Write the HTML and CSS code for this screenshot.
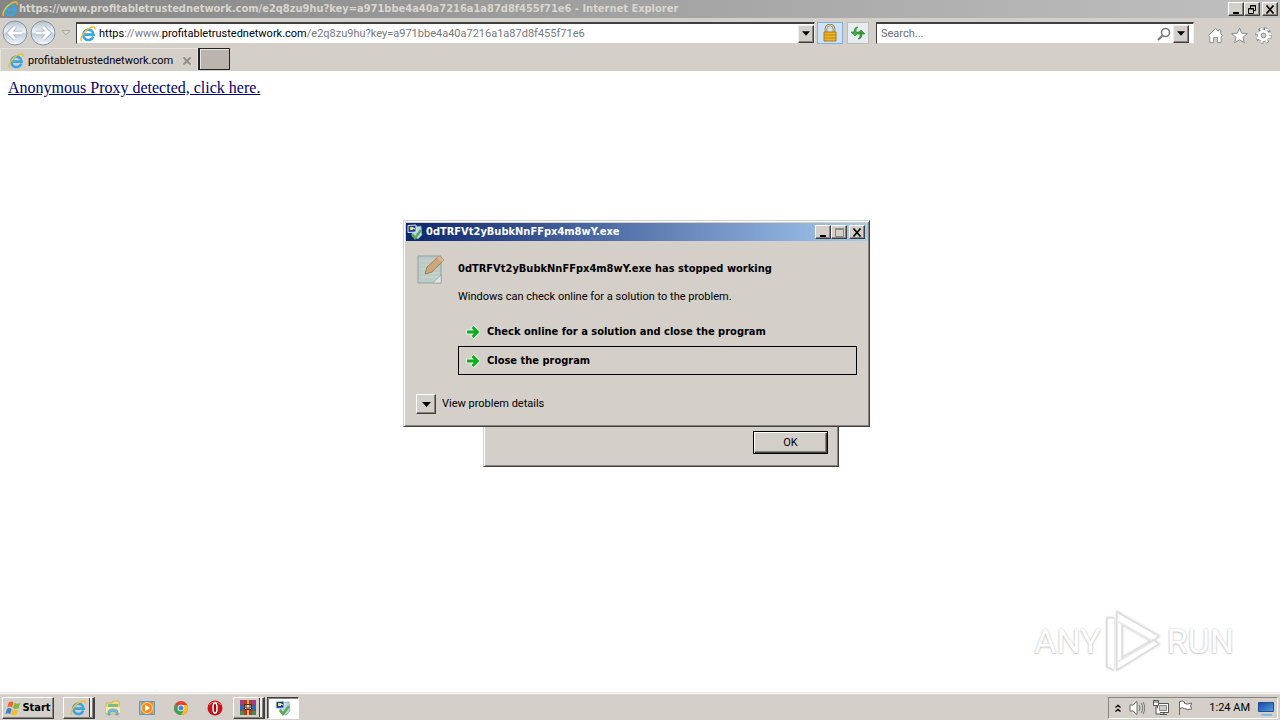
FILE: index.html
```html
<!DOCTYPE html>
<html lang="en">
<head>
<meta charset="utf-8">
<title>Internet Explorer</title>
<link rel="stylesheet" href="styles.css">
</head>
<body>
<svg class="defs" aria-hidden="true">
  <defs>
    <linearGradient id="sphere" x1="0" y1="0" x2="0" y2="1"><stop offset="0" stop-color="#b5c0cb"/><stop offset=".45" stop-color="#eef3f8"/><stop offset=".55" stop-color="#c3d0dd"/><stop offset="1" stop-color="#f4f8fb"/></linearGradient>
    <linearGradient id="screen" x1="0" y1="0" x2="1" y2="1"><stop offset="0" stop-color="#1747a0"/><stop offset="1" stop-color="#4d9be8"/></linearGradient>
    <symbol id="ie" viewBox="0 0 16 16">
      <path d="M13.3 10.6A5.2 5.2 0 1 1 13.6 8.6H4.8" fill="none" stroke="#3aa5e0" stroke-width="2.6"/>
      <path d="M1.6 15C-.6 12.500 4 5 9.500 2.200 13 .3 15.800.3 15 3.600" fill="none" stroke="#efc02c" stroke-width="1.500"/>
    </symbol>
    <symbol id="down" viewBox="0 0 9 5"><path d="M0 0h9L4.500 5z" fill="#000"/></symbol>
    <symbol id="go" viewBox="0 0 14 14">
      <path d="M0 7h11M6 1.500 11.500 7 6 12.500" fill="none" stroke="#e6f6e4" stroke-width="5"/>
      <path d="M1 7h10M6.500 2 11.500 7l-5 5" fill="none" stroke="#0cac1e" stroke-width="2.800"/>
    </symbol>
    <symbol id="app" viewBox="0 0 16 16">
      <path d="M5 3 14 2l1 9-4 4-6-3z" fill="#b9d8e2" stroke="#7896a5" stroke-width=".7"/>
      <path d="M1 1.500 9 1v7L1 8.500z" fill="#173ca4" stroke="#d9e5f4"/>
      <path d="M3 3h3v3H3z" fill="#e8d94e"/><path d="m4 6 2-2 2 1" stroke="#fff" fill="none"/>
      <path d="m5 10 3 4 6-8" fill="none" stroke="#5cab52" stroke-width="2.500"/>
    </symbol>
    <symbol id="min" viewBox="0 0 10 9"><path d="M2 7h6v2H2z" fill="#000"/></symbol>
    <symbol id="close" viewBox="0 0 10 9"><path d="m1.500.5 7 8m0-8-7 8" stroke="#000" stroke-width="1.700"/></symbol>
  </defs>
</svg>

<div class="desktop">
  <header class="browser">
    <div class="titlebar">
      <svg class="icon16"><use href="#ie"/></svg>
      <span class="caption">https://www.profitabletrustednetwork.com/e2q8zu9hu?key=a971bbe4a40a7216a1a87d8f455f71e6 - Internet Explorer</span>
      <div class="controls">
        <button class="ctl" aria-label="Minimize"><svg><use href="#min"/></svg></button>
        <button class="ctl" aria-label="Restore"><svg viewBox="0 0 10 9"><path d="M3.500 3V.5h5v5H7M3 1h6M1.500 3.500h5v5h-5zM1 4h6" fill="none" stroke="#000"/></svg></button>
        <button class="ctl apart" aria-label="Close"><svg><use href="#close"/></svg></button>
      </div>
    </div>

    <div class="toolbar">
      <div class="travel">
        <button class="round" aria-label="Back"><svg viewBox="0 0 26 26"><circle cx="13" cy="13" r="12" fill="url(#sphere)" stroke="#8494a7"/><path d="M20 13H8m5-6-6 6 6 6" fill="none" stroke="#98a9bc" stroke-width="4.500"/><path d="M20 13H8m5-6-6 6 6 6" fill="none" stroke="#fff" stroke-width="3"/></svg></button>
        <button class="round" aria-label="Forward"><svg viewBox="0 0 26 26"><circle cx="13" cy="13" r="12" fill="url(#sphere)" stroke="#8494a7"/><path d="M6 13h12m-5-6 6 6-6 6" fill="none" stroke="#98a9bc" stroke-width="4.500"/><path d="M6 13h12m-5-6 6 6-6 6" fill="none" stroke="#fff" stroke-width="3"/></svg></button>
        <button class="recent" aria-label="Recent pages"><svg viewBox="0 0 10 6"><path d="M1 .5h8L5 5z" fill="#dedbd6" stroke="#aaa6a0"/></svg></button>
      </div>
      <div class="field address">
        <svg class="icon16"><use href="#ie"/></svg>
        <div class="url" role="textbox" aria-label="Address" contenteditable="true" spellcheck="false"><b>https</b>://www.<b>profitabletrustednetwork.com</b>/e2q8zu9hu?key=a971bbe4a40a7216a1a87d8f455f71e6</div>
        <button class="drop" aria-label="Show addresses"><svg><use href="#down"/></svg></button>
      </div>
      <button class="lock" aria-label="Security report"><svg viewBox="0 0 16 18"><path d="M4 8V5a4 4 0 0 1 8 0v3" fill="none" stroke="#8b7a49" stroke-width="2.600"/><path d="M4 8V5a4 4 0 0 1 8 0v3" fill="none" stroke="#e9dcae"/><path d="M2 8h12v9H2z" fill="#eeb526" stroke="#a97a13"/><path d="M2 11h12M2 14h12" stroke="#bf8716"/></svg></button>
      <button class="refresh" aria-label="Refresh"><svg viewBox="0 0 16 14"><path d="M8 1C5 1 4 3 4 6H1l4 4 4-4H6c0-2 0-3 2-5z" fill="#48a947" stroke="#23812a" stroke-width=".6"/><path d="M8 13c3 0 4-2 4-5h3l-4-4-4 4h3c0 2 0 3-2 5z" fill="#37973a" stroke="#23812a" stroke-width=".6"/></svg></button>
      <div class="field search">
        <input type="text" placeholder="Search..." aria-label="Search">
        <svg class="lens" viewBox="0 0 14 14"><circle cx="8.500" cy="5.500" r="4" fill="none" stroke="#7c7c80" stroke-width="1.600"/><path d="m5.500 8.500-4.500 4.500" stroke="#7c7c80" stroke-width="2.200"/></svg>
        <button class="drop" aria-label="Search providers"><svg><use href="#down"/></svg></button>
      </div>
      <div class="commands">
        <button aria-label="Home"><svg viewBox="0 0 18 18"><path d="M1.500 9 9 1.500 12 4.500V3h2.500v4L16.500 9l-1.500 1.500V16.500h-4V11H7v5.500H3v-6z" fill="#fff" stroke="#86888b"/></svg></button>
        <button aria-label="Favorites"><svg viewBox="0 0 18 18"><path d="m9 1 2.300 5.600 6 .4-4.600 3.900 1.500 5.900L9 13.600l-5.200 3.200 1.500-5.900L.7 7l6-.4z" fill="#fff" stroke="#86888b"/></svg></button>
        <button aria-label="Tools"><svg viewBox="0 0 18 18"><circle cx="9" cy="9" r="7" fill="none" stroke="#86888b" stroke-width="3.500" stroke-dasharray="3.400 2.100"/><circle cx="9" cy="9" r="6.300" fill="none" stroke="#86888b"/><circle cx="9" cy="9" r="6.900" fill="none" stroke="#fff" stroke-width="2.300" stroke-dasharray="2.400 3.100" stroke-dashoffset="-.5"/><circle cx="9" cy="9" r="4.400" fill="none" stroke="#fff" stroke-width="3.500"/><circle cx="9" cy="9" r="2.500" fill="#d4d0c8" stroke="#86888b"/></svg></button>
      </div>
    </div>

    <div class="tabs">
      <div class="tab">
        <svg class="icon16"><use href="#ie"/></svg>
        <span>profitabletrustednetwork.com</span>
        <button class="tabclose" aria-label="Close tab"><svg viewBox="0 0 8 8"><path d="m.5.5 7 7m0-7-7 7" stroke="#8b8785" stroke-width="1.800"/></svg></button>
      </div>
      <button class="newtab" aria-label="New tab"></button>
    </div>
  </header>

  <main class="page">
    <a href="#">Anonymous Proxy detected, click here.</a>
  </main>

  <div class="watermark">
    <span>ANY</span>
    <svg viewBox="0 0 58 64"><path d="M12 3 54 27l-7 5L17 15v34l31-18 6 4-42 26zM9 9H2v49l7 3M17 15v34" fill="#fff" stroke="#dedede" stroke-width="1.500"/><path d="m12 12 35 20M12 53l35-20" stroke="#e8e8e8" stroke-width="2"/></svg>
    <span>RUN</span>
  </div>

  <section class="window message"><button class="ok">OK</button></section>

  <section class="window crash" role="dialog" aria-labelledby="crash-title">
    <div class="crashbar">
      <svg class="icon16"><use href="#app"/></svg>
      <span class="caption" id="crash-title">0dTRFVt2yBubkNnFFpx4m8wY.exe</span>
      <div class="controls">
        <button class="ctl" aria-label="Minimize"><svg><use href="#min"/></svg></button>
        <button class="ctl" aria-label="Maximize" disabled><svg viewBox="0 0 10 9"><path d="M1.500.5h8v8h-8zM1 1.500h9" fill="none" stroke="#8b8984"/></svg></button>
        <button class="ctl apart" aria-label="Close"><svg><use href="#close"/></svg></button>
      </div>
    </div>
    <div class="crashbody">
      <svg class="note" viewBox="0 0 30 32"><path d="M2 3h23v27H2z" fill="#bccbc5" stroke="#8fa29d"/><path d="M5 8h17M5 12h17M5 16h17M5 20h17M5 24h17" stroke="#cbd7d1"/><path d="M25 22v8h-8z" fill="#e1e5df" stroke="#8fa29d" stroke-width=".6"/><path d="m9 21 2-7L23 3l5 4-12 12z" fill="#cba779" stroke="#8f744f" stroke-width=".8"/><path d="m23 3 5 4-2 2-5-4z" fill="#dfb598"/></svg>
      <div class="crashmain">
        <h1>0dTRFVt2yBubkNnFFpx4m8wY.exe has stopped working</h1>
        <p>Windows can check online for a solution to the problem.</p>
        <button class="choice"><svg><use href="#go"/></svg>Check online for a solution and close the program</button>
        <button class="choice focused"><svg><use href="#go"/></svg>Close the program</button>
      </div>
    </div>
    <div class="details">
      <button id="details" aria-labelledby="details-label"><svg><use href="#down"/></svg></button>
      <label id="details-label" for="details">View problem details</label>
    </div>
  </section>

  <footer class="taskbar">
    <button class="task start"><svg viewBox="0 0 18 16"><path d="M4 2q3-2 5 0L7.500 7.500q-2.500-2-5 0z" fill="#e9672c"/><path d="M10 2.500q3 2 6 0L14.500 8q-3 2-6 0z" fill="#80b63a"/><path d="M2 9q3-2 5 0L5.500 14.500q-2.500-2-5 0z" fill="#3a82cf"/><path d="M8 9.500q3 2 6 0L12.500 15q-3 2-6 0z" fill="#f3bd2d"/></svg>Start</button>
    <button class="task stacked" aria-label="Internet Explorer"><svg><use href="#ie"/></svg></button>
    <div class="quick">
      <button aria-label="Explorer"><svg viewBox="0 0 16 16"><path d="M1 3h6l1-2h6v13H1z" fill="#f3dc83" stroke="#c5a650" stroke-width=".7"/><path d="M3 4h10v3H3z" fill="#7fbd7b"/><path d="M1 7h14v6H1z" fill="#f8e9a7"/><path d="M3 15v-3q0-3 5-3t5 3v3h-2v-3H5v3z" fill="#77bbe5" stroke="#4794c4" stroke-width=".6"/></svg></button>
      <button aria-label="Media Player"><svg viewBox="0 0 16 16"><path d="M.5 1.500h15v13H.5z" fill="#8cc3e8" stroke="#539acb"/><path d="M2 2h12v12H2z" fill="#f28a20"/><circle cx="8" cy="8" r="5.500" fill="#f28a20" stroke="#fad3a1"/><path d="m6 4.500 5 3.500-5 3.500z" fill="#fff"/></svg></button>
      <button aria-label="Chrome"><svg viewBox="0 0 16 16"><circle cx="8" cy="8" r="7" fill="#e34133"/><path d="M8 8 2 4.500A7 7 0 0 0 8 15l3-5z" fill="#35a853"/><path d="M8 5h6.300A7 7 0 0 1 8 15l3-5z" fill="#fbc116"/><circle cx="8" cy="8" r="3.300" fill="#fff"/><circle cx="8" cy="8" r="2.500" fill="#4285e6"/></svg></button>
      <button aria-label="Opera"><svg viewBox="0 0 16 16"><circle cx="8" cy="8" r="7.500" fill="#c5151b"/><path d="M2 5q6-6 12 0" stroke="#e97878" fill="none"/><ellipse cx="8" cy="8" rx="2" ry="5" fill="#8e1014" stroke="#fff" stroke-width="1.500"/></svg></button>
    </div>
    <button class="task stacked archive" aria-label="WinRAR"><svg viewBox="0 0 16 16"><path d="M0 0h16v15H0z" fill="#b7352f"/><path d="M0 0h4v4H0zM12 0h4v4h-4z" fill="#a33a8b"/><path d="M0 5h4v5H0zM12 5h4v5h-4z" fill="#3466bd"/><path d="M0 11h4v4H0zM12 11h4v4h-4z" fill="#38944b"/><path d="M7 0h2v15H7z" fill="#e7b13b"/><path d="M4.500 4.500h7v5h-7z" fill="#f3dfa7" stroke="#4b2a22"/><path d="M6 5v3h4V5" fill="none" stroke="#553025"/></svg></button>
    <button class="task pressed" aria-label="Error window"><svg><use href="#app"/></svg></button>
    <div class="tray">
      <button class="more" aria-label="Show hidden icons"><svg viewBox="0 0 6 8"><path d="m.5 3.500 2.500-2 2.500 2m-5 4 2.500-2 2.500 2" fill="none" stroke="#000" stroke-width="1.400"/></svg></button>
      <svg class="icon16" viewBox="0 0 16 16"><path d="M1 5h3l4-3.500v13L4 11H1z" fill="#fff" stroke="#6d6d6d"/><path d="M10 5q2 3 0 6m2-8q3.500 5 0 10m2-11q3.500 6 0 12" fill="none" stroke="#777"/></svg>
      <svg class="icon16" viewBox="0 0 16 16"><path d="M4.500 3.500h11v9h-11zM7 14.500h7M11 12v2" fill="#fff" stroke="#555"/><path d="M6.500 5.500h7v5h-7z" fill="#cfccc7" stroke="#888"/><path d="M.5.5h5v5h-5zM2 .5V3m2-2.500V3M3 6v8h5" fill="#fff" stroke="#555"/></svg>
      <svg class="icon16" viewBox="0 0 16 16"><path d="M2.500 15V1.500q3-1 5 .5v1.500q3 1.500 7-.5-1.500 3 0 6-4 1.500-7-.5-2-1.500-5 0" fill="#fff" stroke="#686868"/></svg>
      <time>1:24 AM</time>
      <svg class="icon16" viewBox="0 0 16 16"><path d="M.5 2.500h15v9H.5z" fill="url(#screen)" stroke="#234f92"/><path d="M4 14h10v1.500H3z" fill="#6faee3"/></svg>
    </div>
  </footer>
</div>
</body>
</html>
```
FILE: styles.css
```css
* { box-sizing: border-box; }
:root {
  --face: #d4cfc9;
  --light: #fff;
  --mid: #87837d;
  --dark: #404040;
  --strong: "DejaVu Sans Condensed", "DejaVu Sans", sans-serif;
}
body { margin: 0; font: 11px/14px Roboto, sans-serif; color: #000; }
button, input { font: inherit; color: inherit; }
button { margin: 0; padding: 0; border: 0; background: none; display: flex; align-items: center; justify-content: center; flex: none; }
svg { display: block; flex: none; }
.defs { position: absolute; width: 0; height: 0; }
.icon16 { width: 16px; height: 16px; }
.desktop { position: relative; display: flex; flex-direction: column; min-height: 100vh; background: #fff; }

.browser { background: var(--face); }
.titlebar { display: flex; align-items: center; height: 18px; padding: 0 2px; background: linear-gradient(90deg, #858585, #c0c0c0); }
.titlebar .caption { color: #d9d6d0; padding-left: 1px; }
.caption { flex: 1; font-family: var(--strong); font-weight: bold; white-space: nowrap; }
.controls { display: flex; }
.ctl { width: 16px; height: 14px; background: var(--face); border: 1px solid; border-color: var(--light) var(--dark) var(--dark) var(--light); box-shadow: inset -1px -1px var(--mid); }
.ctl svg { width: 10px; height: 9px; }
.apart { margin-left: 2px; }

.toolbar { display: flex; align-items: center; height: 30px; padding-left: 2px; }
.travel { display: flex; align-items: center; width: 74px; gap: 2px; }
.round svg { width: 26px; height: 26px; }
.recent { width: 16px; }
.recent svg { width: 10px; height: 6px; }
.field { display: flex; align-items: center; height: 22px; background: #fff; border: 1px solid; border-top-width: 2px; border-color: var(--dark) #eee var(--face) var(--dark); }
.address { flex: 5 1 0; padding-left: 3px; }
.url { flex: 1; padding-left: 3px; color: #77777b; white-space: nowrap; overflow: hidden; }
.url b { font-weight: normal; color: #000; }
.drop { width: 16px; height: 18px; background: var(--face); border: 1px solid; border-color: #eee var(--dark) var(--dark) #eee; box-shadow: inset -1px -1px var(--mid); }
.drop svg { width: 8px; height: 5px; }
.lock { width: 26px; height: 22px; margin-left: 2px; border: 1px solid #84aede; background: #cfe1f7; }
.lock svg { width: 16px; height: 18px; }
.refresh { width: 22px; height: 22px; margin-left: 4px; border: 1px solid #b9bdc2; background: #e9edf0; }
.refresh svg { width: 16px; height: 14px; }
.search { flex: 0 1 318px; margin-left: 7px; padding-right: 4px; }
.search input { flex: 1; min-width: 0; border: 0; outline: 0; padding: 0 4px; background: none; }
.search input::placeholder { color: #6e6e6e; opacity: 1; }
.lens { width: 14px; height: 14px; margin-right: 2px; }
.commands { display: flex; gap: 7px; padding: 4px 8px 0 13px; }
.commands svg { width: 17px; height: 17px; }

.tabs { display: flex; height: 23px; }
.tab { display: flex; align-items: center; width: 198px; padding: 2px 6px 0 7px; border: 1px solid #e6e3dd; border-bottom: 0; }
.tab span { flex: 1; padding-left: 4px; white-space: nowrap; }
.tabclose svg { width: 8px; height: 8px; }
.newtab { width: 32px; height: 22px; background: #bbb3ae; border: 1px solid #222; border-left-width: 2px; box-shadow: inset 1px 1px #e9e6e2; }

.page { flex: 1; padding: 8px; font: 16px/18px "Liberation Serif", serif; }
.page a { color: #00006e; }

.watermark { position: absolute; right: 46px; bottom: 47px; display: flex; align-items: center; gap: 4px; color: #fff; font: 34px/64px Roboto, sans-serif; text-shadow: 0 0 2px #bbb, 0 1px 2px #ccc; }
.watermark svg { width: 58px; height: 64px; filter: drop-shadow(0 0 1px #ccc); }

.window { position: absolute; background: var(--face); border: 1px solid; border-color: var(--face) var(--dark) var(--dark) var(--face); box-shadow: inset 1px 1px var(--light), inset -1px -1px var(--mid); }
.message { left: 483px; top: 387px; width: 356px; padding: 43px 10px 12px; }
.ok { width: 75px; height: 23px; margin-left: auto; background: var(--face); border: 1px solid #000; box-shadow: inset 1px 1px var(--light), inset -1px -1px var(--dark), inset -2px -2px var(--mid); }
.crash { left: 403px; top: 220px; width: 467px; padding: 2px 1px 12px 2px; }
.crashbar { display: flex; align-items: center; height: 18px; padding: 0 3px 0 1px; color: #fff; background: linear-gradient(90deg, #0c266c, #a6caf0); }
.crashbar .caption { padding-left: 3px; }
.crashbody { display: flex; padding: 12px 11px 0 10px; }
.note { width: 30px; height: 32px; }
.crashmain { flex: 1; padding: 9px 0 0 12px; }
h1 { margin: 0 0 14px; font: bold 11px/14px var(--strong); }
p { margin: 0 0 13px; }
.choice { width: 100%; height: 29px; padding: 0 7px; gap: 7px; justify-content: flex-start; font-family: var(--strong); font-weight: bold; border: 1px solid transparent; }
.choice svg { width: 14px; height: 14px; }
.focused { border-color: #000; }
.details { display: flex; align-items: center; gap: 6px; padding: 19px 10px 0; }
.details button { width: 20px; height: 20px; border: 1px solid; border-color: #fff var(--dark) var(--dark) #fff; box-shadow: inset -1px -1px var(--mid); }
.details svg { width: 9px; height: 5px; }

.taskbar { display: flex; align-items: center; height: 28px; padding: 2px 2px 0; background: var(--face); border-top: 1px solid #e4e1dc; box-shadow: inset 0 1px #fff; }
.task { width: 32px; height: 22px; background: var(--face); border: 1px solid; border-color: #fff var(--dark) var(--dark) #fff; box-shadow: inset -1px -1px var(--mid); }
.task svg { width: 16px; height: 16px; }
.start { width: 52px; margin-right: 9px; font-family: var(--strong); font-weight: bold; }
.start svg { width: 17px; height: 16px; }
.stacked { border-right-width: 2px; box-shadow: inset -1px -1px var(--mid), inset -3px 0 #eee, inset -4px 0 var(--dark); padding-right: 2px; }
.quick { display: flex; gap: 18px; padding: 0 10px; }
.quick svg { width: 16px; height: 16px; }
.archive { margin-right: 2px; }
.pressed { background: #fff; border-color: var(--dark) #fff #fff var(--dark); box-shadow: inset 1px 1px var(--mid); }
.tray { display: flex; align-items: center; gap: 8px; height: 22px; margin-left: auto; padding: 0 3px 0 6px; border: 1px solid; border-color: var(--mid) #fff #fff var(--mid); }
.more svg { width: 6px; height: 8px; }
.tray time { padding-left: 8px; }
```
